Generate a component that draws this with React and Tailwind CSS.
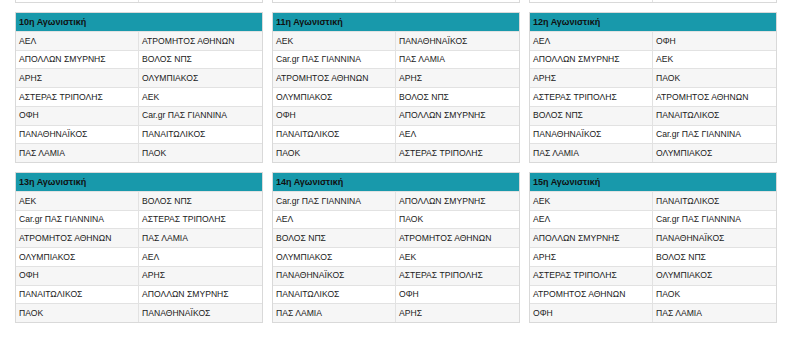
const rounds = [
  {
    title: '10η Αγωνιστική',
    games: [
      ['ΑΕΛ', 'ΑΤΡΟΜΗΤΟΣ ΑΘΗΝΩΝ'],
      ['ΑΠΟΛΛΩΝ ΣΜΥΡΝΗΣ', 'ΒΟΛΟΣ ΝΠΣ'],
      ['ΑΡΗΣ', 'ΟΛΥΜΠΙΑΚΟΣ'],
      ['ΑΣΤΕΡΑΣ ΤΡΙΠΟΛΗΣ', 'ΑΕΚ'],
      ['ΟΦΗ', 'Car.gr ΠΑΣ ΓΙΑΝΝΙΝΑ'],
      ['ΠΑΝΑΘΗΝΑΪΚΟΣ', 'ΠΑΝΑΙΤΩΛΙΚΟΣ'],
      ['ΠΑΣ ΛΑΜΙΑ', 'ΠΑΟΚ'],
    ],
  },
  {
    title: '11η Αγωνιστική',
    games: [
      ['ΑΕΚ', 'ΠΑΝΑΘΗΝΑΪΚΟΣ'],
      ['Car.gr ΠΑΣ ΓΙΑΝΝΙΝΑ', 'ΠΑΣ ΛΑΜΙΑ'],
      ['ΑΤΡΟΜΗΤΟΣ ΑΘΗΝΩΝ', 'ΑΡΗΣ'],
      ['ΟΛΥΜΠΙΑΚΟΣ', 'ΒΟΛΟΣ ΝΠΣ'],
      ['ΟΦΗ', 'ΑΠΟΛΛΩΝ ΣΜΥΡΝΗΣ'],
      ['ΠΑΝΑΙΤΩΛΙΚΟΣ', 'ΑΕΛ'],
      ['ΠΑΟΚ', 'ΑΣΤΕΡΑΣ ΤΡΙΠΟΛΗΣ'],
    ],
  },
  {
    title: '12η Αγωνιστική',
    games: [
      ['ΑΕΛ', 'ΟΦΗ'],
      ['ΑΠΟΛΛΩΝ ΣΜΥΡΝΗΣ', 'ΑΕΚ'],
      ['ΑΡΗΣ', 'ΠΑΟΚ'],
      ['ΑΣΤΕΡΑΣ ΤΡΙΠΟΛΗΣ', 'ΑΤΡΟΜΗΤΟΣ ΑΘΗΝΩΝ'],
      ['ΒΟΛΟΣ ΝΠΣ', 'ΠΑΝΑΙΤΩΛΙΚΟΣ'],
      ['ΠΑΝΑΘΗΝΑΪΚΟΣ', 'Car.gr ΠΑΣ ΓΙΑΝΝΙΝΑ'],
      ['ΠΑΣ ΛΑΜΙΑ', 'ΟΛΥΜΠΙΑΚΟΣ'],
    ],
  },
  {
    title: '13η Αγωνιστική',
    games: [
      ['ΑΕΚ', 'ΒΟΛΟΣ ΝΠΣ'],
      ['Car.gr ΠΑΣ ΓΙΑΝΝΙΝΑ', 'ΑΣΤΕΡΑΣ ΤΡΙΠΟΛΗΣ'],
      ['ΑΤΡΟΜΗΤΟΣ ΑΘΗΝΩΝ', 'ΠΑΣ ΛΑΜΙΑ'],
      ['ΟΛΥΜΠΙΑΚΟΣ', 'ΑΕΛ'],
      ['ΟΦΗ', 'ΑΡΗΣ'],
      ['ΠΑΝΑΙΤΩΛΙΚΟΣ', 'ΑΠΟΛΛΩΝ ΣΜΥΡΝΗΣ'],
      ['ΠΑΟΚ', 'ΠΑΝΑΘΗΝΑΪΚΟΣ'],
    ],
  },
  {
    title: '14η Αγωνιστική',
    games: [
      ['Car.gr ΠΑΣ ΓΙΑΝΝΙΝΑ', 'ΑΠΟΛΛΩΝ ΣΜΥΡΝΗΣ'],
      ['ΑΕΛ', 'ΠΑΟΚ'],
      ['ΒΟΛΟΣ ΝΠΣ', 'ΑΤΡΟΜΗΤΟΣ ΑΘΗΝΩΝ'],
      ['ΟΛΥΜΠΙΑΚΟΣ', 'ΑΕΚ'],
      ['ΠΑΝΑΘΗΝΑΪΚΟΣ', 'ΑΣΤΕΡΑΣ ΤΡΙΠΟΛΗΣ'],
      ['ΠΑΝΑΙΤΩΛΙΚΟΣ', 'ΟΦΗ'],
      ['ΠΑΣ ΛΑΜΙΑ', 'ΑΡΗΣ'],
    ],
  },
  {
    title: '15η Αγωνιστική',
    games: [
      ['ΑΕΚ', 'ΠΑΝΑΙΤΩΛΙΚΟΣ'],
      ['ΑΕΛ', 'Car.gr ΠΑΣ ΓΙΑΝΝΙΝΑ'],
      ['ΑΠΟΛΛΩΝ ΣΜΥΡΝΗΣ', 'ΠΑΝΑΘΗΝΑΪΚΟΣ'],
      ['ΑΡΗΣ', 'ΒΟΛΟΣ ΝΠΣ'],
      ['ΑΣΤΕΡΑΣ ΤΡΙΠΟΛΗΣ', 'ΟΛΥΜΠΙΑΚΟΣ'],
      ['ΑΤΡΟΜΗΤΟΣ ΑΘΗΝΩΝ', 'ΠΑΟΚ'],
      ['ΟΦΗ', 'ΠΑΣ ΛΑΜΙΑ'],
    ],
  },
];

const RoundTable = ({ title, games }) => (
  <div className="w-[248px] h-[151px] border border-[#d9d9d9] bg-[#e2e2e2] flex flex-col">
    {/* Header */}
    <div className="h-[18px] shrink-0 bg-[#1899ab] pl-[3px] flex items-center text-[9px] font-bold text-[#111]">
      {title}
    </div>

    {/* Games */}
    <div className="flex-1 grid grid-cols-[122px_1fr] grid-rows-7 gap-[1px] pt-[1px]">
      {games.map(([home, away], i) => (
        <div key={i} className="contents">
          <div
            className={`pl-[3px] flex items-center ${
              i % 2 === 0 ? 'bg-[#f6f6f6]' : 'bg-white'
            }`}
          >
            {home}
          </div>
          <div
            className={`pl-[3px] flex items-center ${
              i % 2 === 0 ? 'bg-[#f6f6f6]' : 'bg-white'
            }`}
          >
            {away}
          </div>
        </div>
      ))}
    </div>
  </div>
);

// bottom edge of the previous row of tables, cut off by the screenshot
const CutEdge = () => (
  <div className="w-[248px] h-[3px] border-x border-b border-[#d9d9d9] bg-[#e2e2e2] grid grid-cols-[122px_1fr] gap-[1px]">
    <div className="bg-white" />
    <div className="bg-white" />
  </div>
);

export default function App() {
  return (
    <div
      className="w-[797px] h-[341px] bg-white overflow-hidden text-[8.6px] text-[#1a1a1a] leading-none"
      style={{ fontFamily: '"Liberation Sans", Arial, sans-serif' }}
    >
      <div className="pl-[15px] grid grid-cols-[248px_248px_248px] gap-x-[9px]">
        <CutEdge />
        <CutEdge />
        <CutEdge />
      </div>
      <div className="pl-[15px] pt-[9px] grid grid-cols-[248px_248px_248px] gap-x-[9px] gap-y-[9px]">
        {rounds.map((r) => (
          <RoundTable key={r.title} title={r.title} games={r.games} />
        ))}
      </div>
    </div>
  );
}
